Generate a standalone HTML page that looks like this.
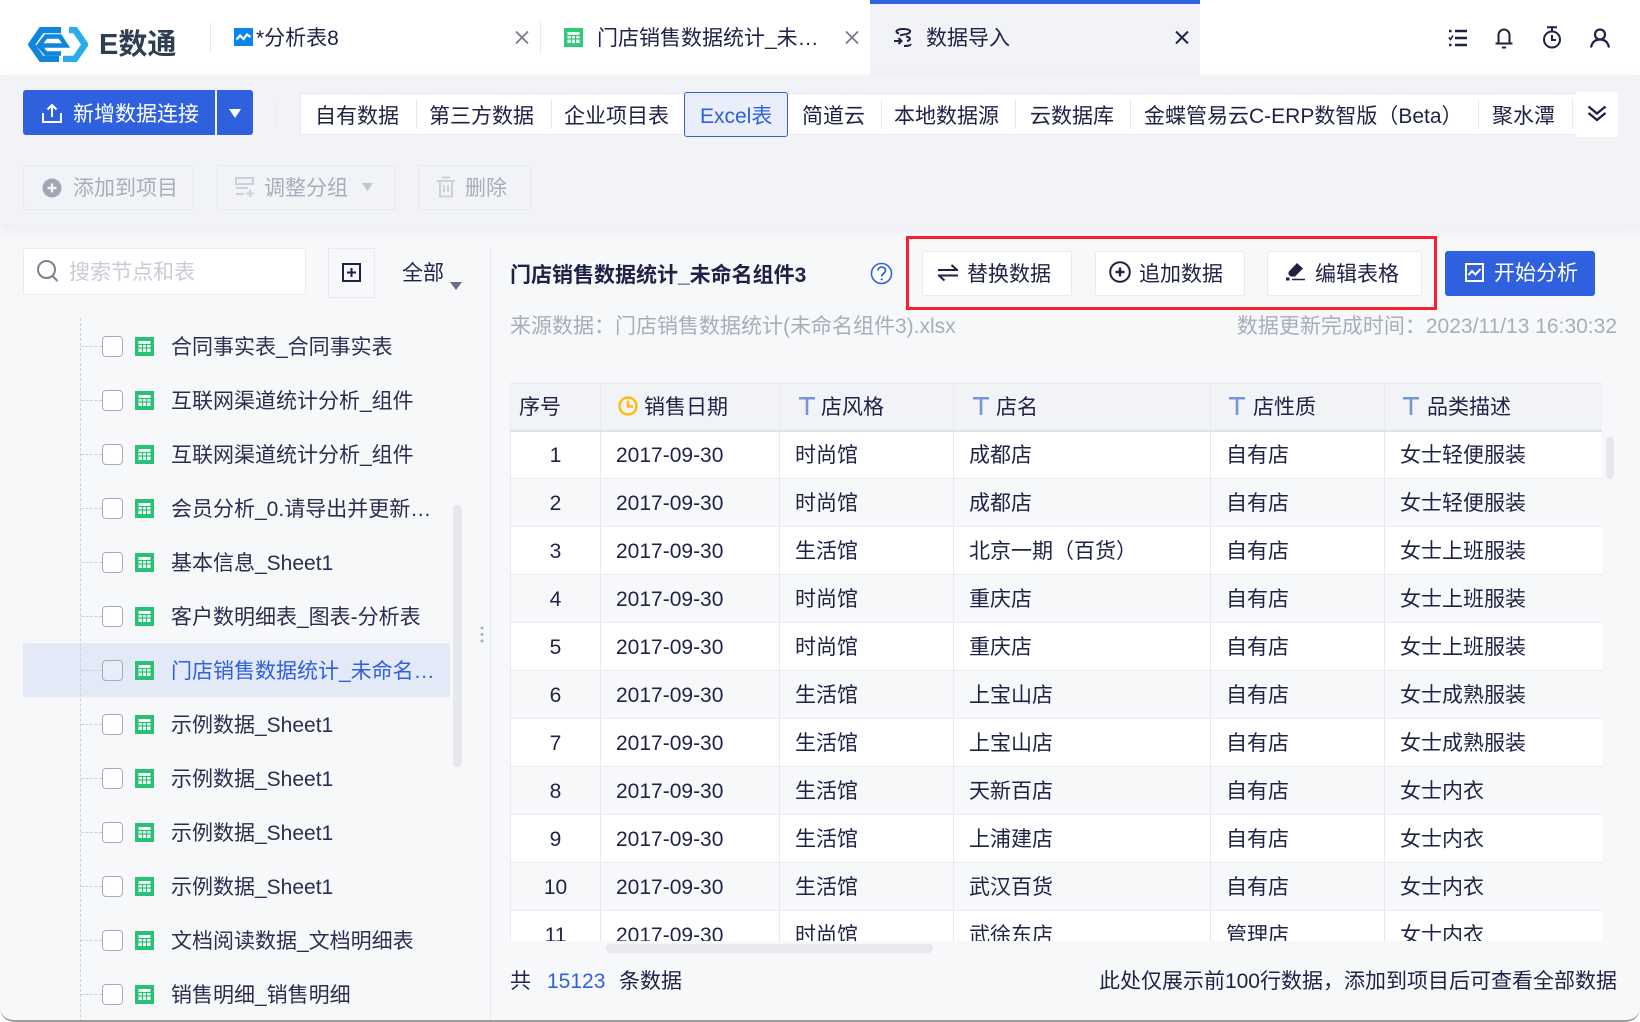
<!DOCTYPE html>
<html lang="zh"><head><meta charset="utf-8"><title>数据导入</title>
<style>
*{box-sizing:border-box}
html,body{margin:0;padding:0;width:1640px;height:1022px;overflow:hidden;background:#fff}
body{font-family:"Liberation Sans","Noto Sans CJK SC",sans-serif;font-size:21px;color:#1e2246}
#w{position:absolute;left:0;top:0;width:1640px;height:1022px;background:#f7f8fa;border-bottom:2px solid #9c9c9c;border-radius:0 0 14px 14px;overflow:hidden}
.a,.t,svg{position:absolute}
.t{white-space:nowrap;line-height:30px;height:30px;margin-top:2px}
.g{color:#a8adbb}
.b{background:#fff;border:1px solid #e8eaf0;border-radius:3px}
.d{background:#f2f3f7;border:1px solid #e6e8ef;border-radius:3px}
.s{position:absolute;width:1px;background:#e8eaf0}
.k{position:absolute;left:102px;width:21px;height:21px;background:#fff;border:1.5px solid #a7acbc;border-radius:4px}
.h{position:absolute;left:81px;width:21px;border-top:1px dashed #ccd0da}
table{border-collapse:collapse;table-layout:fixed;position:absolute;left:0;top:0;width:1092px}
td,th{padding:2px 0 0 15px;height:48px;border:1px solid #e8eaf0;font-weight:400;text-align:left;white-space:nowrap;overflow:hidden;line-height:30px}
tr{background:#fff}
tr.e{background:#f7f8fa}
tr.hd{background:#f2f3f7}
tr.hd th{border-bottom:2px solid #dfe2ea;height:47px;position:relative;padding-top:3px}
td.n{text-align:center;padding:2px 0 0 0}
td:first-child,th:first-child{border-left:1px solid #e8eaf0}
</style></head><body>
<svg width="0" height="0"><defs>
<symbol id="sh" viewBox="0 0 19 19"><rect width="19" height="19" fill="#27c274"/><rect x="3.5" y="4" width="12" height="11" fill="#fff"/><path d="M3.5 7.5h12M3.5 11h12M7.5 7.5V15M11.5 7.5V15" stroke="#27c274" stroke-width="1.2"/></symbol>
<symbol id="tt" viewBox="0 0 16 18"><path d="M0 1.2h16M8 1.2V18" stroke="#7296d8" stroke-width="2.6" fill="none"/></symbol>
</defs></svg>
<div id="w">

<!-- title bar -->
<div class="a" style="left:0;top:0;width:1640px;height:75px;background:#fff"></div>
<svg style="left:28px;top:27px" width="60" height="35" viewBox="0 0 60 35" fill="none">
<path d="M33 3H13.500L3.500 17.500 13.500 32H31" stroke="#0f86db" stroke-width="6.500"/>
<path d="M11 18.500H38L32 9.500H18L11 18.500 18 26.500H33" stroke="#0f86db" stroke-width="4.500"/>
<path d="M41 3H47L57 17.500 47 32H35" stroke="#27aee8" stroke-width="6.500"/></svg>
<div class="t" style="left:99px;top:27px;height:32px;line-height:32px;font-size:29px;font-weight:700;color:#2d3e50">E数通</div>
<div class="s" style="left:210px;top:22px;height:31px"></div>

<svg style="left:234px;top:28px" width="19" height="18" viewBox="0 0 19 18"><rect width="19" height="18" fill="#0a84ee"/><path d="M2.500 11.500 6 7.500 9.500 11 13 6.500 16.500 9" stroke="#fff" stroke-width="2.200" fill="none"/></svg>
<div class="t" style="left:256px;top:22px">*分析表8</div>
<svg style="left:515px;top:31px" width="14" height="13" viewBox="0 0 14 13"><path d="M1 .5 13 12.500M13 .5 1 12.500" stroke="#777b8c" stroke-width="1.800"/></svg>
<div class="s" style="left:540px;top:22px;height:31px"></div>

<svg style="left:564px;top:28px" width="19" height="19" viewBox="0 0 19 19"><rect width="19" height="19" fill="#2ecb78"/><rect x="3.500" y="4" width="12" height="11" fill="#fff"/><path d="M3.500 7.500h12M3.500 11h12M7.500 7.500V15M11.500 7.500V15" stroke="#2ecb78" stroke-width="1.200"/></svg>
<div class="t" style="left:597px;top:22px;width:224px;overflow:hidden">门店销售数据统计_未…</div>
<svg style="left:845px;top:31px" width="14" height="13" viewBox="0 0 14 13"><path d="M1 .5 13 12.500M13 .5 1 12.500" stroke="#777b8c" stroke-width="1.800"/></svg>

<div class="a" style="left:870px;top:0;width:330px;height:75px;background:#f2f3f7;border-top:4px solid #2f60de"></div>
<svg style="left:893px;top:28px" width="20" height="19" viewBox="0 0 20 19" fill="none" stroke="#1e2246" stroke-width="2"><path d="M6 5.500C1 4 4 1 10 1s9 2 6 4c-2 1.500-7 1.500-9 2.500M13 8.500c6 1 4 4 1 4.500M11 18c5 0 7-1 6.500-2"/><path d="M1 13h7M5.500 10l3 3-3 3"/></svg>
<div class="t" style="left:926px;top:22px">数据导入</div>
<svg style="left:1175px;top:31px" width="14" height="13" viewBox="0 0 14 13"><path d="M1 .5 13 12.500M13 .5 1 12.500" stroke="#1e2246" stroke-width="2"/></svg>

<svg style="left:1448px;top:28px" width="20" height="20" viewBox="0 0 20 20" fill="none" stroke="#1e2246" stroke-width="2.400"><path d="M7 3h12M7 10h12M7 17h12"/><path d="M1 3h2.500M1 17h2.500" stroke-width="2.400"/><path d="M.8 9.500 2.500 11.500 5 7.500" stroke-width="1.600"/></svg>
<svg style="left:1495px;top:27px" width="18" height="22" viewBox="0 0 18 22" fill="none" stroke="#1e2246" stroke-width="2"><path d="M3.500 16V8a5.500 5.500 0 0 1 11 0v8M.5 16.500h17"/><path d="M7 20.500h4"/></svg>
<svg style="left:1542px;top:26px" width="20" height="23" viewBox="0 0 20 23" fill="none" stroke="#1e2246" stroke-width="2"><circle cx="10" cy="13.500" r="8"/><path d="M5 1.200h10M10 1v4"/><path d="M10 9v5h4"/></svg>
<svg style="left:1590px;top:28px" width="20" height="20" viewBox="0 0 20 20" fill="none" stroke="#1e2246" stroke-width="2.200"><circle cx="10" cy="6.500" r="5"/><path d="M1 19.500c1-5 3.500-8 9-8s8 3 9 8"/></svg>

<!-- toolbar -->
<div class="a" style="left:0;top:75px;width:1640px;height:150px;background:#f2f3f7;box-shadow:0 4px 12px rgba(30,34,70,.06)"></div>
<div class="a" style="left:23px;top:90px;width:192px;height:45px;background:#2f60de;border-radius:3px 0 0 3px"></div>
<div class="a" style="left:217px;top:90px;width:36px;height:45px;background:#2f60de;border-radius:0 3px 3px 0"></div>
<svg style="left:42px;top:103px" width="20" height="20" viewBox="0 0 20 20" fill="none" stroke="#fff" stroke-width="2"><path d="M10 14V2M5.500 6.500 10 2l4.500 4.500M1 10v9h18v-9"/></svg>
<div class="t" style="left:73px;top:98px;color:#fff">新增数据连接</div>
<svg style="left:229px;top:109px" width="12" height="9" viewBox="0 0 12 9"><path d="M0 0h12L6 9z" fill="#fff"/></svg>
<div class="s" style="left:276px;top:101px;height:24px"></div>

<div class="a" style="left:300px;top:93px;width:1276px;height:42px;background:#fff;border:1px solid #e8eaf0;border-right:0"></div>
<div class="s" style="left:416px;top:99px;height:30px"></div>
<div class="s" style="left:551px;top:99px;height:30px"></div>
<div class="s" style="left:881px;top:99px;height:30px"></div>
<div class="s" style="left:1015px;top:99px;height:30px"></div>
<div class="s" style="left:1130px;top:99px;height:30px"></div>
<div class="s" style="left:1478px;top:99px;height:30px"></div>
<div class="s" style="left:1572px;top:99px;height:30px"></div>
<div class="a" style="left:684px;top:92px;width:104px;height:45px;background:#e9eefa;border:1.500px solid #2f60de;border-radius:3px"></div>
<div class="t" style="left:315px;top:100px">自有数据</div>
<div class="t" style="left:429px;top:100px">第三方数据</div>
<div class="t" style="left:564px;top:100px">企业项目表</div>
<div class="t" style="left:700px;top:100px;color:#2f60de">Excel表</div>
<div class="t" style="left:802px;top:100px">简道云</div>
<div class="t" style="left:894px;top:100px">本地数据源</div>
<div class="t" style="left:1030px;top:100px">云数据库</div>
<div class="t" style="left:1144px;top:100px">金蝶管易云C-ERP数智版（Beta）</div>
<div class="t" style="left:1492px;top:100px">聚水潭</div>
<div class="a" style="left:1576px;top:92px;width:42px;height:45px;background:#fff"></div>
<svg style="left:1587px;top:105px" width="20" height="17" viewBox="0 0 20 17" fill="none" stroke="#1e2246" stroke-width="2.400"><path d="M1.500 1.500 10 8.500l8.500-7M1.500 8 10 15l8.500-7"/></svg>

<div class="a d" style="left:23px;top:165px;width:171px;height:45px"></div>
<svg style="left:42px;top:178px" width="20" height="20" viewBox="0 0 20 20"><circle cx="10" cy="10" r="9.500" fill="#a0a5b8"/><path d="M10 5.500v9M5.500 10h9" stroke="#f2f3f7" stroke-width="2.400"/></svg>
<div class="t g" style="left:73px;top:172px">添加到项目</div>
<div class="a d" style="left:217px;top:165px;width:179px;height:45px"></div>
<svg style="left:235px;top:176px" width="20" height="22" viewBox="0 0 20 22" fill="none" stroke="#cdd0da" stroke-width="2"><path d="M1 2h17v6H1zM1 12h12M1 18h8M11 17.500h8M15 14v7"/></svg>
<div class="t g" style="left:264px;top:172px">调整分组</div>
<svg style="left:362px;top:183px" width="11" height="8" viewBox="0 0 11 8"><path d="M0 0h11L5.500 8z" fill="#c2c5d1"/></svg>
<div class="a d" style="left:418px;top:165px;width:113px;height:45px"></div>
<svg style="left:437px;top:176px" width="18" height="22" viewBox="0 0 18 22" fill="none" stroke="#cdd0da" stroke-width="2"><path d="M0 5h18M5 1.500h8M3 5v15.500h12V5M7 9v7M11 9v7"/></svg>
<div class="t g" style="left:465px;top:172px">删除</div>

<!-- left pane -->
<div class="a b" style="left:23px;top:248px;width:283px;height:47px"></div>
<svg style="left:36px;top:259px" width="24" height="25" viewBox="0 0 24 25" fill="none" stroke="#7b8090" stroke-width="2"><circle cx="10.500" cy="10.500" r="8.500"/><path d="m16.500 17 5 5"/></svg>
<div class="t" style="left:69px;top:256px;color:#c8ccd6">搜索节点和表</div>
<div class="a" style="left:328px;top:248px;width:47px;height:50px;border:1px solid #e8eaf0;background:#f7f8fa"></div>
<svg style="left:342px;top:263px" width="19" height="19" viewBox="0 0 19 19" fill="none" stroke="#1e2246" stroke-width="2"><rect x="1" y="1" width="17" height="17"/><path d="M9.500 5v9M5 9.500h9"/></svg>
<div class="t" style="left:402px;top:257px">全部</div>
<svg style="left:450px;top:282px" width="12" height="8" viewBox="0 0 12 8"><path d="M0 0h12L6 8z" fill="#6a6f88"/></svg>
<div class="s" style="left:490px;top:248px;height:774px"></div>

<div class="a" style="left:23px;top:643px;width:427px;height:54px;background:#e3e9f6"></div>
<div class="a" style="left:80px;top:318px;height:704px;border-left:1px dashed #ccd0da"></div>

<div class="h" style="top:346px"></div><div class="k" style="top:336px"></div><svg style="left:135px;top:337px" width="19" height="19"><use href="#sh"/></svg><div class="t" style="left:171px;top:331px;color:#2a2e50">合同事实表_合同事实表</div>
<div class="h" style="top:400px"></div><div class="k" style="top:390px"></div><svg style="left:135px;top:391px" width="19" height="19"><use href="#sh"/></svg><div class="t" style="left:171px;top:385px;color:#2a2e50">互联网渠道统计分析_组件</div>
<div class="h" style="top:454px"></div><div class="k" style="top:444px"></div><svg style="left:135px;top:445px" width="19" height="19"><use href="#sh"/></svg><div class="t" style="left:171px;top:439px;color:#2a2e50">互联网渠道统计分析_组件</div>
<div class="h" style="top:508px"></div><div class="k" style="top:498px"></div><svg style="left:135px;top:499px" width="19" height="19"><use href="#sh"/></svg><div class="t" style="left:171px;top:493px;color:#2a2e50">会员分析_0.请导出并更新…</div>
<div class="h" style="top:562px"></div><div class="k" style="top:552px"></div><svg style="left:135px;top:553px" width="19" height="19"><use href="#sh"/></svg><div class="t" style="left:171px;top:547px;color:#2a2e50">基本信息_Sheet1</div>
<div class="h" style="top:616px"></div><div class="k" style="top:606px"></div><svg style="left:135px;top:607px" width="19" height="19"><use href="#sh"/></svg><div class="t" style="left:171px;top:601px;color:#2a2e50">客户数明细表_图表-分析表</div>
<div class="h" style="top:670px"></div><div class="k" style="top:660px;background:#e9edf7"></div><svg style="left:135px;top:661px" width="19" height="19"><use href="#sh"/></svg><div class="t" style="left:171px;top:655px;color:#2f60de">门店销售数据统计_未命名…</div>
<div class="h" style="top:724px"></div><div class="k" style="top:714px"></div><svg style="left:135px;top:715px" width="19" height="19"><use href="#sh"/></svg><div class="t" style="left:171px;top:709px;color:#2a2e50">示例数据_Sheet1</div>
<div class="h" style="top:778px"></div><div class="k" style="top:768px"></div><svg style="left:135px;top:769px" width="19" height="19"><use href="#sh"/></svg><div class="t" style="left:171px;top:763px;color:#2a2e50">示例数据_Sheet1</div>
<div class="h" style="top:832px"></div><div class="k" style="top:822px"></div><svg style="left:135px;top:823px" width="19" height="19"><use href="#sh"/></svg><div class="t" style="left:171px;top:817px;color:#2a2e50">示例数据_Sheet1</div>
<div class="h" style="top:886px"></div><div class="k" style="top:876px"></div><svg style="left:135px;top:877px" width="19" height="19"><use href="#sh"/></svg><div class="t" style="left:171px;top:871px;color:#2a2e50">示例数据_Sheet1</div>
<div class="h" style="top:940px"></div><div class="k" style="top:930px"></div><svg style="left:135px;top:931px" width="19" height="19"><use href="#sh"/></svg><div class="t" style="left:171px;top:925px;color:#2a2e50">文档阅读数据_文档明细表</div>
<div class="h" style="top:994px"></div><div class="k" style="top:984px"></div><svg style="left:135px;top:985px" width="19" height="19"><use href="#sh"/></svg><div class="t" style="left:171px;top:979px;color:#2a2e50">销售明细_销售明细</div>

<div class="a" style="left:453px;top:505px;width:9px;height:262px;background:#e6e8ec;border-radius:4px"></div>
<svg style="left:480px;top:626px" width="4" height="18"><circle cx="2" cy="2" r="1.500" fill="#a9aec0"/><circle cx="2" cy="8.500" r="1.500" fill="#a9aec0"/><circle cx="2" cy="15" r="1.500" fill="#a9aec0"/></svg>

<!-- right header -->
<div class="t" style="left:510px;top:259px;font-weight:700">门店销售数据统计_未命名组件3</div>
<svg style="left:870px;top:262px" width="23" height="23" viewBox="0 0 23 23"><circle cx="11.500" cy="11.500" r="10" fill="#fff" stroke="#2f60de" stroke-width="1.600"/><path d="M8 8.500c0-4.500 7.500-4.500 7.500 0 0 3-3.800 2.800-3.800 6" fill="none" stroke="#2f60de" stroke-width="1.700"/><circle cx="11.700" cy="17.300" r="1.100" fill="#2f60de"/></svg>
<div class="a" style="left:906px;top:236px;width:531px;height:74px;border:3px solid #f8202e"></div>
<div class="a b" style="left:922px;top:251px;width:150px;height:45px"></div>
<svg style="left:938px;top:263px" width="20" height="19" viewBox="0 0 20 19" fill="none" stroke="#1e2246" stroke-width="2"><path d="M0 7h19L13.500 2M20 12.500H1L6.500 17.500"/></svg>
<div class="t" style="left:967px;top:258px">替换数据</div>
<div class="a b" style="left:1095px;top:251px;width:150px;height:45px"></div>
<svg style="left:1109px;top:261px" width="22" height="22" viewBox="0 0 22 22" fill="none" stroke="#1e2246" stroke-width="2"><circle cx="11" cy="11" r="9.800"/><path d="M11 6.500v9M6.500 11h9" stroke-width="2.400"/></svg>
<div class="t" style="left:1139px;top:258px">追加数据</div>
<div class="a b" style="left:1267px;top:251px;width:155px;height:45px"></div>
<svg style="left:1286px;top:262px" width="19" height="20" viewBox="0 0 19 20"><path d="M11 1 17 6.500 9 14.500 4.500 14.500 2.500 12.500 2.500 10z" fill="#1e2246"/><path d="M0 15.500h3.500v3H0z" fill="#1e2246"/><path d="M6 17.500h13" stroke="#1e2246" stroke-width="1.500"/></svg>
<div class="t" style="left:1315px;top:258px">编辑表格</div>
<div class="a" style="left:1445px;top:251px;width:150px;height:45px;background:#2f60de;border-radius:3px"></div>
<svg style="left:1465px;top:263px" width="19" height="19" viewBox="0 0 19 19" fill="none" stroke="#fff" stroke-width="2"><rect x="1" y="1" width="17" height="17"/><path d="M3.500 12 7 8 10.500 11.500 15.500 6" stroke-width="2"/></svg>
<div class="t" style="left:1494px;top:257px;color:#fff">开始分析</div>
<div class="t g" style="left:510px;top:310px;font-size:21px">来源数据：门店销售数据统计(未命名组件3).xlsx</div>
<div class="t g" style="right:23px;top:310px;font-size:21px">数据更新完成时间：2023/11/13 16:30:32</div>

<!-- table -->
<div class="a" style="left:510px;top:383px;width:1092px;height:558px;overflow:hidden">
<table>
<colgroup><col style="width:90px"><col style="width:179px"><col style="width:174px"><col style="width:257px"><col style="width:174px"><col style="width:218px"></colgroup>
<tr class="hd"><th style="padding-left:8px">序号</th><th style="padding-left:43px">销售日期</th><th style="padding-left:41px">店风格</th><th style="padding-left:42px">店名</th><th style="padding-left:42px">店性质</th><th style="padding-left:42px">品类描述</th></tr>
<tr><td class="n">1</td><td>2017-09-30</td><td>时尚馆</td><td>成都店</td><td>自有店</td><td>女士轻便服装</td></tr>
<tr class="e"><td class="n">2</td><td>2017-09-30</td><td>时尚馆</td><td>成都店</td><td>自有店</td><td>女士轻便服装</td></tr>
<tr><td class="n">3</td><td>2017-09-30</td><td>生活馆</td><td>北京一期（百货）</td><td>自有店</td><td>女士上班服装</td></tr>
<tr class="e"><td class="n">4</td><td>2017-09-30</td><td>时尚馆</td><td>重庆店</td><td>自有店</td><td>女士上班服装</td></tr>
<tr><td class="n">5</td><td>2017-09-30</td><td>时尚馆</td><td>重庆店</td><td>自有店</td><td>女士上班服装</td></tr>
<tr class="e"><td class="n">6</td><td>2017-09-30</td><td>生活馆</td><td>上宝山店</td><td>自有店</td><td>女士成熟服装</td></tr>
<tr><td class="n">7</td><td>2017-09-30</td><td>生活馆</td><td>上宝山店</td><td>自有店</td><td>女士成熟服装</td></tr>
<tr class="e"><td class="n">8</td><td>2017-09-30</td><td>生活馆</td><td>天新百店</td><td>自有店</td><td>女士内衣</td></tr>
<tr><td class="n">9</td><td>2017-09-30</td><td>生活馆</td><td>上浦建店</td><td>自有店</td><td>女士内衣</td></tr>
<tr class="e"><td class="n">10</td><td>2017-09-30</td><td>生活馆</td><td>武汉百货</td><td>自有店</td><td>女士内衣</td></tr>
<tr><td class="n">11</td><td>2017-09-30</td><td>时尚馆</td><td>武徐东店</td><td>管理店</td><td>女士内衣</td></tr>
</table>
</div>
<svg style="left:618px;top:396px" width="20" height="20" viewBox="0 0 20 20" fill="none" stroke="#fdbc0d" stroke-width="2.500"><circle cx="10" cy="10" r="8.500"/><path d="M10 4.500V10.500H15"/></svg>
<svg style="left:799px;top:397px" width="16" height="18"><use href="#tt"/></svg>
<svg style="left:973px;top:397px" width="16" height="18"><use href="#tt"/></svg>
<svg style="left:1229px;top:397px" width="16" height="18"><use href="#tt"/></svg>
<svg style="left:1403px;top:397px" width="16" height="18"><use href="#tt"/></svg>

<div class="a" style="left:1606px;top:437px;width:8px;height:42px;background:#e6e8ec;border-radius:4px"></div>
<div class="a" style="left:606px;top:944px;width:327px;height:9px;background:#e8e9ed;border-radius:4px"></div>

<!-- footer -->
<div class="t" style="left:510px;top:965px">共</div>
<div class="t" style="left:547px;top:965px;color:#2f60de">15123</div>
<div class="t" style="left:619px;top:965px">条数据</div>
<div class="t" style="right:23px;top:965px">此处仅展示前100行数据，添加到项目后可查看全部数据</div>
</div>
</body></html>
